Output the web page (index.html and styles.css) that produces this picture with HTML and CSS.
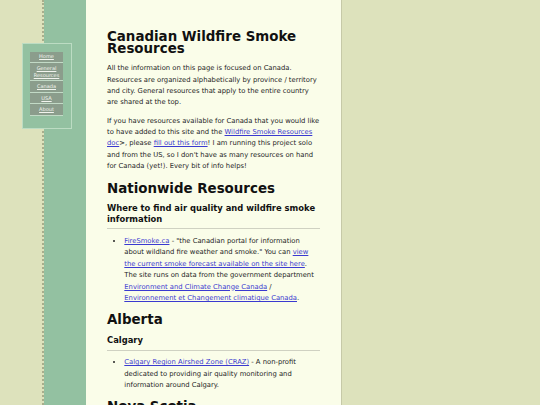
FILE: index.html
```html
<!DOCTYPE html>
<html lang="en">
<head>
<meta charset="utf-8">
<title>Canadian Wildfire Smoke Resources</title>
<link rel="stylesheet" href="styles.css">
</head>
<body>
<div class="page">
  <div class="rail"></div>
  <main class="main">
    <h1>Canadian Wildfire Smoke Resources</h1>
    <p>All the information on this page is focused on Canada. Resources are organized alphabetically by province / territory and city. General resources that apply to the entire country are shared at the top.</p>
    <p>If you have resources available for Canada that you would like to have added to this site and the <a href="#">Wildfire Smoke Resources doc</a>&gt;, please <a href="#">fill out this form</a>! I am running this project solo and from the US, so I don't have as many resources on hand for Canada (yet!). Every bit of info helps!</p>
    <h2>Nationwide Resources</h2>
    <h3>Where to find air quality and wildfire smoke information</h3>
    <ul>
      <li><a href="#">FireSmoke.ca</a> - "the Canadian portal for information about wildland fire weather and smoke." You can <a href="#">view the current smoke forecast available on the site here</a>. The site runs on data from the government department <a href="#">Environment and Climate Change Canada</a> / <a href="#">Environnement et Changement climatique Canada</a>.</li>
    </ul>
    <h2>Alberta</h2>
    <h3>Calgary</h3>
    <ul>
      <li><a href="#">Calgary Region Airshed Zone (CRAZ)</a> - A non-profit dedicated to providing air quality monitoring and information around Calgary.</li>
    </ul>
    <h2>Nova Scotia</h2>
    <h3>Halifax</h3>
    <ul>
      <li><a href="#">Nova Scotia Air Quality</a> - Provincial air quality monitoring information.</li>
    </ul>
  </main>
</div>
<nav class="nav">
  <a href="#">Home</a>
  <a href="#">General Resources</a>
  <a href="#">Canada</a>
  <a href="#">USA</a>
  <a href="#">About</a>
</nav>
</body>
</html>
```
FILE: styles.css
```css
html, body {
  margin: 0;
  padding: 0;
}
body {
  background: #dde2bc;
  font-family: "DejaVu Sans", Verdana, sans-serif;
  color: #242424;
  overflow: hidden;
}
.page {
  display: flex;
  min-height: 100vh;
  padding-left: 41.5px;
}
.rail {
  flex: none;
  width: 42.5px;
  background: #93c1a1;
  background-clip: padding-box;
  border-left: 2px dotted #a9ae8c;
}
.main {
  flex: none;
  width: 213px;
  padding: 30.8px 21px 0;
  background: #fafde9;
  border-right: 1px solid #c6c9a8;
  font-size: 6.8px;
  line-height: 11.4px;
}
.main h1 {
  font-size: 13.4px;
  line-height: 11.7px;
  margin: 0 0 9px;
  color: #111;
}
.main p {
  margin: 6.8px 0;
}
.main h2 {
  font-size: 13.4px;
  line-height: 14px;
  margin: 9px 0 0;
  color: #111;
}
.main h3 {
  font-size: 8.4px;
  line-height: 10.7px;
  margin: 7.6px 0 0;
  padding-bottom: 3.8px;
  border-bottom: 1px solid #cfd1c2;
  color: #111;
}
.main ul {
  margin: 6.6px 0;
  padding-left: 17.3px;
}
.main a {
  color: #3a3ad0;
  text-decoration: underline;
}
.nav {
  position: absolute;
  left: 21.5px;
  top: 42.5px;
  width: 33px;
  padding: 8px 7.5px 12px;
  background: #93c1a1;
  border: 1px solid #bcdcc3;
  display: flex;
  flex-direction: column;
}
.nav a {
  display: block;
  background: #8b9d8c;
  color: #f2f4ee;
  text-align: center;
  font-size: 5px;
  line-height: 6.7px;
  padding: 1.9px 0;
  border-bottom: 1px solid #c2dac6;
}
```
